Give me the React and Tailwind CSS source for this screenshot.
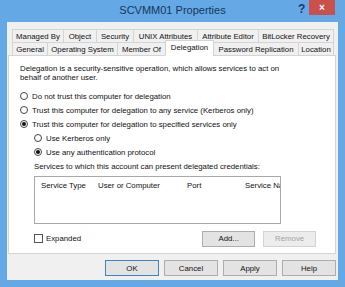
import React from "react";

const tabsTop = [
  { label: "Managed By", w: 51 },
  { label: "Object", w: 33 },
  { label: "Security", w: 37 },
  { label: "UNIX Attributes", w: 64 },
  { label: "Attribute Editor", w: 61 },
  { label: "BitLocker Recovery", w: 75 },
];

const tabsBottom = [
  { label: "General", w: 35 },
  { label: "Operating System", w: 70 },
  { label: "Member Of", w: 48 },
  { label: "Delegation", w: 48, active: true },
  { label: "Password Replication", w: 85 },
  { label: "Location", w: 35 },
];

function Radio({ checked, children }) {
  return (
    <div className="flex items-center h-[14px]">
      <span className="w-[8px] h-[8px] rounded-full border border-[#444] bg-white flex items-center justify-center">
        {checked && <span className="w-[4px] h-[4px] rounded-full bg-[#111]" />}
      </span>
      <span className="ml-[4px]">{children}</span>
    </div>
  );
}

function Button({ children, w = 54, primary, disabled }) {
  return (
    <div
      className={`h-[16px] flex items-center justify-center border ${
        primary ? "border-[#3d86c6]" : disabled ? "border-[#d3d3d3]" : "border-[#adadad]"
      } ${disabled ? "text-[#a3a3a3] bg-[#ececec]" : "text-[#111] bg-[#e3e3e3]"}`}
      style={{ width: w }}
    >
      {children}
    </div>
  );
}

export default function App() {
  return (
    <div
      className="w-[345px] h-[287px] bg-[#64a9e6] flex flex-col text-[7.8px] leading-[9px] text-[#111]"
      style={{ fontFamily: '"Liberation Sans", Arial, sans-serif' }}
    >
      {/* Title bar */}
      <div className="h-[22px] relative flex items-center justify-center">
        <span className="text-[11px] text-[#18355a] mt-[-2px]">SCVMM01 Properties</span>
        <span className="absolute left-[298px] top-[3px] text-[12px] leading-[12px] font-bold text-[#1c3a66]">?</span>
        <div className="absolute left-[309px] top-0 w-[26px] h-[15px] bg-[#c9504b] flex items-center justify-center">
          <span className="text-white text-[10px] font-bold leading-none">×</span>
        </div>
      </div>

      {/* Dialog body */}
      <div className="flex-1 mx-[7px] mb-[7px] bg-[#f0f0f0] flex flex-col">
        {/* Tabs */}
        <div className="mt-[7px] ml-[5px] flex">
          {tabsTop.map((t) => (
            <div
              key={t.label}
              className="h-[13px] border border-b-0 border-[#d4d4d4] -mr-px flex items-center justify-center bg-[#f0f0f0] whitespace-nowrap"
              style={{ width: t.w + 1 }}
            >
              {t.label}
            </div>
          ))}
        </div>
        <div className="ml-[5px] flex items-end h-[14px] relative z-10">
          {tabsBottom.map((t) => (
            <div
              key={t.label}
              className={`border border-[#d4d4d4] -mr-px flex items-center justify-center whitespace-nowrap ${
                t.active ? "h-[16px] bg-white border-b-white pb-[2px]" : "h-[14px] bg-[#f0f0f0]"
              }`}
              style={{ width: t.w + 1 }}
            >
              {t.label}
            </div>
          ))}
        </div>

        {/* Panel */}
        <div className="ml-[1px] mr-[2px] h-[199px] -mt-px bg-white border border-[#d4d4d4] flex flex-col pl-[11px]">
          <div className="mt-[8px]">
            <div className="h-[9px]">Delegation is a security-sensitive operation, which allows services to act on</div>
            <div className="h-[9px]">behalf of another user.</div>
          </div>
          <div className="mt-[7px] flex flex-col">
            <Radio>Do not trust this computer for delegation</Radio>
            <Radio>Trust this computer for delegation to any service (Kerberos only)</Radio>
            <Radio checked>Trust this computer for delegation to specified services only</Radio>
            <div className="ml-[14px] flex flex-col">
              <Radio>Use Kerberos only</Radio>
              <Radio checked>Use any authentication protocol</Radio>
              <div className="h-[14px] flex items-center">
                Services to which this account can present delegated credentials:
              </div>
            </div>
          </div>
          <div className="mt-[3px] ml-[14px] w-[247px] h-[48px] border border-[#a9a9a9] overflow-hidden">
            <div className="h-[17px] flex items-center whitespace-nowrap">
              <span className="ml-[6px] w-[57px]">Service Type</span>
              <span className="w-[89px]">User or Computer</span>
              <span className="w-[58px]">Port</span>
              <span className="w-[35px] overflow-hidden">Service Name</span>
            </div>
          </div>
          <div className="mt-[7px] ml-[14px] flex items-center h-[15px]">
            <span className="w-[9px] h-[9px] border border-[#555] bg-white" />
            <span className="ml-[3px]">Expanded</span>
            <div className="ml-[121px] flex gap-[8px]">
              <Button w={53}>Add...</Button>
              <Button w={53} disabled>
                Remove
              </Button>
            </div>
          </div>
        </div>

        {/* Bottom buttons */}
        <div className="mt-[6px] ml-[98px] flex gap-[5px]">
          <Button primary>OK</Button>
          <Button>Cancel</Button>
          <Button>Apply</Button>
          <Button>Help</Button>
        </div>
      </div>
    </div>
  );
}
